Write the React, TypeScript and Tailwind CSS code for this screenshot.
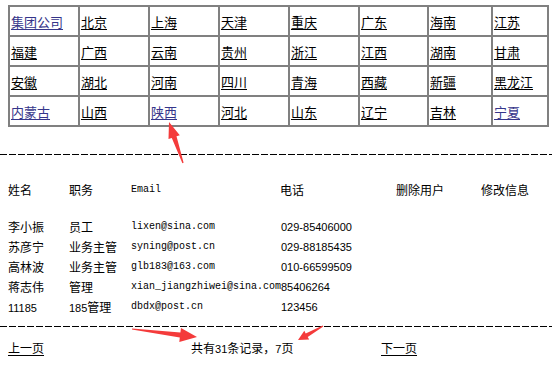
import React from "react";

const rows: string[][] = [
  ["集团公司", "北京", "上海", "天津", "重庆", "广东", "海南", "江苏"],
  ["福建", "广西", "云南", "贵州", "浙江", "江西", "湖南", "甘肃"],
  ["安徽", "湖北", "河南", "四川", "青海", "西藏", "新疆", "黑龙江"],
  ["内蒙古", "山西", "陕西", "河北", "山东", "辽宁", "吉林", "宁夏"],
];
const visited = new Set(["集团公司", "内蒙古", "陕西", "宁夏"]);
const colW = [70, 70, 70, 70, 70, 69, 64, 56];

const people = [
  { name: "李小振", role: "员工", email: "lixen@sina.com", phone: "029-85406000" },
  { name: "苏彦宁", role: "业务主管", email: "syning@post.cn", phone: "029-88185435" },
  { name: "高林波", role: "业务主管", email: "glb183@163.com", phone: "010-66599509" },
  { name: "蒋志伟", role: "管理", email: "xian_jiangzhiwei@sina.com", phone: "85406264" },
  { name: "11185", role: "185管理", email: "dbdx@post.cn", phone: "123456" },
];

function Arrow({ tail, tip, head, hw, sw }: { tail: [number, number]; tip: [number, number]; head: number; hw: number; sw: number }) {
  const dx = tip[0] - tail[0];
  const dy = tip[1] - tail[1];
  const len = Math.hypot(dx, dy);
  const ux = dx / len;
  const uy = dy / len;
  const nx = -uy;
  const ny = ux;
  const bx = tip[0] - ux * head;
  const by = tip[1] - uy * head;
  const pts = [
    [tail[0] + nx * 0.6, tail[1] + ny * 0.6],
    [bx + nx * sw, by + ny * sw],
    [bx + nx * hw, by + ny * hw],
    [tip[0], tip[1]],
    [bx - nx * hw, by - ny * hw],
    [bx - nx * sw, by - ny * sw],
    [tail[0] - nx * 0.6, tail[1] - ny * 0.6],
  ]
    .map((p) => `${p[0].toFixed(1)},${p[1].toFixed(1)}`)
    .join(" ");
  return <polygon points={pts} fill="#f43b3b" />;
}

const digit = "font-['Liberation_Sans',sans-serif] text-[11px]";
const mono = "font-['Liberation_Mono',monospace] text-[10px]";

function Dashes() {
  return <div className="h-px w-full bg-[linear-gradient(to_right,#000_7px,transparent_7px)] bg-[length:9px_1px]" />;
}

function renderMixed(s: string) {
  const parts = s.split(/(\d+)/).filter((p) => p.length > 0);
  return parts.map((p, i) =>
    /^\d+$/.test(p) ? (
      <span key={i} className={digit}>
        {p}
      </span>
    ) : (
      <span key={i}>{p}</span>
    )
  );
}

export default function App() {
  return (
    <div className="relative w-[552px] h-[368px] overflow-hidden bg-white text-black font-['Noto_Sans_CJK_SC','Noto_Sans_CJK_SC',sans-serif] text-[12px] leading-none">
      <table
        className="ml-[8px] mt-[5px] border border-[#808080] border-separate border-spacing-0 table-fixed"
        style={{ width: 539 }}
      >
        <colgroup>
          {colW.map((w, i) => (
            <col key={i} style={{ width: w }} />
          ))}
        </colgroup>
        <tbody>
          {rows.map((r, ri) => (
            <tr key={ri}>
              {r.map((c, ci) => (
                <td key={ci} className="border border-[#808080] p-0">
                  <div className="h-[28px] flex items-center pl-[1px]">
                    <a
                      className={`text-[13px] underline underline-offset-[2px] decoration-1 ${visited.has(c) ? "text-[#35358a]" : "text-black"}`}
                    >
                      {c}
                    </a>
                  </div>
                </td>
              ))}
            </tr>
          ))}
        </tbody>
      </table>

      <div className="mt-[27px]">
        <Dashes />
      </div>

      <div className="mt-[25px] h-[20px] flex items-center pl-[8px]">
        <div className="w-[61px]">姓名</div>
        <div className="w-[62px]">职务</div>
        <div className={`w-[149px] ${mono}`}>Email</div>
        <div className="w-[116px]">电话</div>
        <div className="w-[85px]">删除用户</div>
        <div>修改信息</div>
      </div>

      <div className="mt-[17px] flex flex-col">
        {people.map((p, i) => (
          <div key={i} className="h-[20px] flex items-center pl-[8px]">
            <div className="w-[61px] shrink-0">{renderMixed(p.name)}</div>
            <div className="w-[62px] shrink-0">{renderMixed(p.role)}</div>
            <div className={`w-[150px] shrink-0 whitespace-nowrap ${mono}`}>{p.email}</div>
            <div className={`shrink-0 ${digit}`}>{p.phone}</div>
          </div>
        ))}
      </div>

      <div className="mt-[9px]">
        <Dashes />
      </div>

      <div className="mt-[11px] h-[20px] flex items-center pl-[8px]">
        <div className="w-[183px]">
          <a className="underline underline-offset-[2px]">上一页</a>
        </div>
        <div className="w-[190px]">
          共有<span className={digit}>31</span>条记录，<span className={digit}>7</span>页
        </div>
        <div>
          <a className="underline underline-offset-[2px]">下一页</a>
        </div>
      </div>

      <svg className="absolute left-0 top-0 pointer-events-none" width={552} height={368}>
        <Arrow tail={[183, 163]} tip={[169, 122]} head={16} hw={6} sw={2.5} />
        <Arrow tail={[132, 329]} tip={[197, 337]} head={17} hw={7} sw={2.5} />
        <Arrow tail={[323, 326]} tip={[298, 340]} head={10} hw={5} sw={2} />
      </svg>
    </div>
  );
}
